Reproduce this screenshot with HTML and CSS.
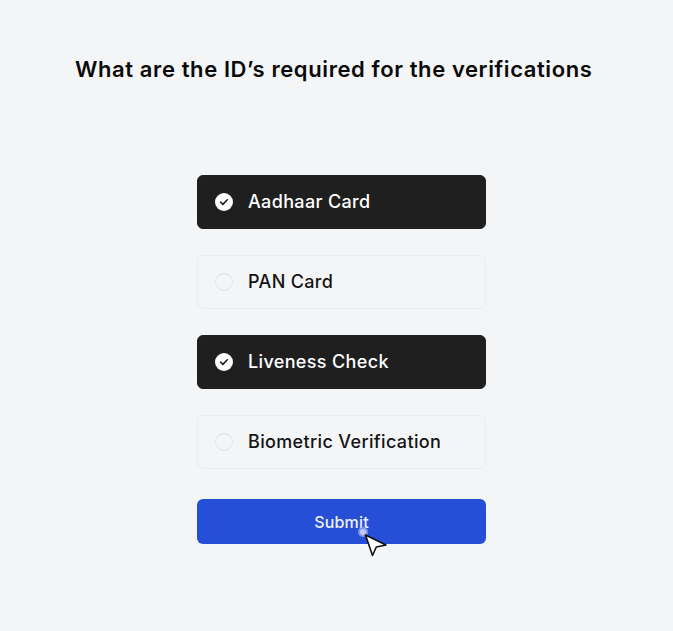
FILE: index.html
```html
<!DOCTYPE html>
<html>
<head>
<meta charset="utf-8">
<link rel="stylesheet" href="styles.css">
</head>
<body>
<main class="page">
  <h1 class="title">What are the ID’s required for the verifications</h1>
  <div class="options">
    <div class="option selected">
      <span class="radio"><svg width="18" height="18" viewBox="0 0 18 18"><circle cx="9" cy="9" r="9" fill="#fff"/><path d="M5.6 9.2 L7.9 11.4 L12.3 6.8" fill="none" stroke="#1f1f1f" stroke-width="1.6" stroke-linecap="round" stroke-linejoin="round"/></svg></span>
      <span class="label">Aadhaar Card</span>
    </div>
    <div class="option">
      <span class="radio empty"></span>
      <span class="label">PAN Card</span>
    </div>
    <div class="option selected">
      <span class="radio"><svg width="18" height="18" viewBox="0 0 18 18"><circle cx="9" cy="9" r="9" fill="#fff"/><path d="M5.6 9.2 L7.9 11.4 L12.3 6.8" fill="none" stroke="#1f1f1f" stroke-width="1.6" stroke-linecap="round" stroke-linejoin="round"/></svg></span>
      <span class="label">Liveness Check</span>
    </div>
    <div class="option">
      <span class="radio empty"></span>
      <span class="label">Biometric Verification</span>
    </div>
    <div class="submit-wrap">
      <button class="submit">Submit</button>
      <span class="cursor">
        <svg width="32" height="32" viewBox="0 0 32 32">
          <circle cx="5" cy="5" r="5" fill="#9aa6e8" opacity="0.8"/>
          <circle cx="5" cy="5" r="3" fill="#c7cdf2" opacity="0.9"/>
          <path d="M7.5 8 L28 18 L18.3 20 L14.5 28.5 Z" fill="#fff" stroke="#111" stroke-width="1.6" stroke-linejoin="round"/>
        </svg>
      </span>
    </div>
  </div>
</main>
</body>
</html>
```
FILE: styles.css
```css
* { box-sizing: border-box; }
html, body {
  margin: 0;
  padding: 0;
  background: #f4f5f7;
  font-family: Inter, "Noto Sans", "Liberation Sans", sans-serif;
}
.page {
  width: 673px;
  height: 631px;
  padding-top: 56px;
}
.title {
  margin: 0;
  padding-left: 75px;
  font-size: 22px;
  line-height: 27px;
  font-weight: 600;
  color: #0a0a0a;
  letter-spacing: 0.6px;
}
.options {
  margin-top: 92px;
  margin-left: 197px;
  width: 289px;
  display: flex;
  flex-direction: column;
  gap: 26px;
}
.option {
  height: 54px;
  border-radius: 6px;
  border: 1px solid #ebecef;
  display: flex;
  align-items: center;
  padding-left: 17px;
  gap: 15px;
  color: #141414;
}
.option.selected {
  background: #1f1f1f;
  border-color: #1f1f1f;
  color: #ffffff;
}
.radio {
  width: 18px;
  height: 18px;
  display: flex;
}
.radio.empty {
  border: 1.5px solid #e3e4e7;
  border-radius: 50%;
}
.label {
  font-size: 18px;
  font-weight: 500;
  line-height: 22px;
  letter-spacing: 0.35px;
}
.submit-wrap {
  position: relative;
  margin-top: 4px;
}
.submit {
  display: block;
  width: 289px;
  height: 45px;
  border: none;
  border-radius: 6px;
  background: #264fd7;
  color: #eef1ff;
  font-family: inherit;
  font-size: 16px;
  font-weight: 500;
  letter-spacing: 0.2px;
  padding: 0;
}
.cursor {
  position: absolute;
  left: 161px;
  top: 28px;
  width: 32px;
  height: 32px;
}
```
